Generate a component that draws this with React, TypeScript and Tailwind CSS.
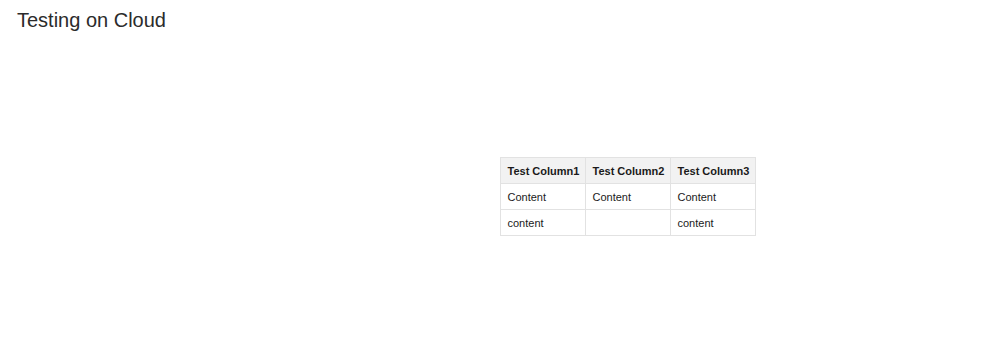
const rows = [
  ["Content", "Content", "Content"],
  ["content", "", "content"],
];

export default function App() {
  return (
    <div className="w-full h-[356px] bg-white font-['Liberation_Sans',Arial,sans-serif] text-[#222]">
      <h1 className="px-[17px] pt-[7px] text-[20px] leading-[26px] text-[#2b2b2b]">Testing on Cloud</h1>

      <div className="grid grid-cols-2 mt-[124px]">
        <div />
        <div>
          <table className="table-fixed w-[256px] border-collapse text-[11px] text-[#1a1a1a] whitespace-nowrap">
            <thead>
              <tr className="bg-[#f2f2f2]">
                {["Test Column1", "Test Column2", "Test Column3"].map((h) => (
                  <th key={h} className="h-[26px] px-[7px] pt-px text-left font-bold border border-[#e2e2e2]">
                    {h}
                  </th>
                ))}
              </tr>
            </thead>
            <tbody>
              {rows.map((r, i) => (
                <tr key={i}>
                  {r.map((c, j) => (
                    <td key={j} className="h-[26px] px-[7px] pt-[2px] border border-[#e2e2e2]">
                      {c}
                    </td>
                  ))}
                </tr>
              ))}
            </tbody>
          </table>
        </div>
      </div>
    </div>
  );
}
